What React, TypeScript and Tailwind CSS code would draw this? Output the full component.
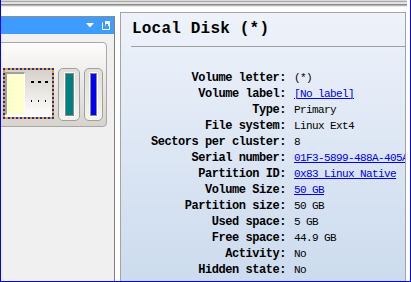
import React from "react";

const rows: { label: string; value: string; link?: boolean }[] = [
  { label: "Volume letter:", value: "(*)" },
  { label: "Volume label:", value: "[No label]", link: true },
  { label: "Type:", value: "Primary" },
  { label: "File system:", value: "Linux Ext4" },
  { label: "Sectors per cluster:", value: "8" },
  { label: "Serial number:", value: "01F3-5899-488A-405A", link: true },
  { label: "Partition ID:", value: "0x83 Linux Native", link: true },
  { label: "Volume Size:", value: "50 GB", link: true },
  { label: "Partition size:", value: "50 GB" },
  { label: "Used space:", value: "5 GB" },
  { label: "Free space:", value: "44.9 GB" },
  { label: "Activity:", value: "No" },
  { label: "Hidden state:", value: "No" },
];

export default function App() {
  return (
    <div className="w-[411px] h-[282px] overflow-hidden bg-white border-x border-b border-[#0000ff] flex flex-col font-['Liberation_Mono',monospace]">
      {/* top strip */}
      <div className="flex flex-col w-[406px] shrink-0">
        <div className="h-px bg-[#d8d8d8]" />
        <div className="h-px bg-[#a6a6a6]" />
        <div className="h-[2px] bg-[#e2e2e2]" />
        <div className="h-px bg-[#8c8c8c]" />
        <div className="h-px bg-[#b4b4b4]" />
        <div className="h-px bg-[#ececec]" />
      </div>

      <div className="flex flex-1 min-h-0">
        {/* left panel */}
        <div className="mt-[9px] w-[114px] shrink-0 border-t border-t-[#8e8e8e] border-r border-r-[#808080] bg-[#f0f0f0] flex flex-col overflow-hidden">
          <div className="h-[17px] bg-[#3f9cff] flex items-center justify-end pr-[4px] gap-[8px]">
            <svg width="8" height="5" viewBox="0 0 8 5">
              <path d="M0 0 H8 L4 4.5 Z" fill="#fff" />
            </svg>
            <svg width="8" height="9" viewBox="0 0 8 9">
              <path d="M0.5 1.5 V8.5 H7.5 V1.5" fill="none" stroke="#fff" strokeWidth="1" />
              <rect x="3" y="0" width="5" height="5" fill="#fff" />
              <path d="M2 7 L5 4" stroke="#3f9cff" strokeWidth="1.2" />
              <path d="M3 3 H6 V6 Z" fill="#3f9cff" />
            </svg>
          </div>
          <div className="mt-[8px] ml-[-6px] mr-[7px] h-[85px] rounded-[4px] border border-[#a8a8a8] bg-linear-to-b from-[#fcfcfc] to-[#d8d4cc] flex items-start pl-[7px] pt-[25px] gap-[4px]">
            {/* selected item */}
            <div className="w-[51px] h-[51px] bg-[#f5a000] shrink-0">
              <div className="w-full h-full border-2 border-dotted border-[#1030e0] bg-clip-padding bg-linear-to-b from-[#d6d2ca] to-[#ffffff] flex pt-[1px]">
                <div className="w-[20px] h-[43px] border-l-2 border-t-2 border-[#a0a0a0] border-r border-b border-r-white border-b-white bg-[#ffffcc] mt-[1px]" />
                <div className="flex flex-col ml-[6px]">
                  <div className="flex gap-[4px] mt-[10px]">
                    <div className="w-[3px] h-[2px] bg-black" />
                    <div className="w-[3px] h-[2px] bg-black" />
                    <div className="w-[3px] h-[2px] bg-black" />
                  </div>
                  <div className="flex gap-[6px] mt-[17px]">
                    <div className="w-[1px] h-[2px] bg-black" />
                    <div className="w-[1px] h-[2px] bg-black" />
                    <div className="w-[1px] h-[2px] bg-black" />
                  </div>
                </div>
              </div>
            </div>
            {/* teal item */}
            <div className="w-[22px] h-[53px] shrink-0 rounded-[5px] border border-[#a0a0a0] bg-linear-to-b from-[#e2dfd8] to-[#f4f3ef] flex justify-center pt-[4px]">
              <div className="w-[9px] h-[43px] border border-[#8a8a8a] bg-[#008080] outline outline-white" />
            </div>
            {/* blue item */}
            <div className="w-[19px] h-[53px] shrink-0 rounded-[5px] border border-[#a0a0a0] bg-linear-to-b from-[#e2dfd8] to-[#f4f3ef] flex justify-center pt-[4px]">
              <div className="w-[7px] h-[43px] border border-[#8a8a8a] bg-[#0000ff] outline outline-white" />
            </div>
          </div>
        </div>

        {/* right panel */}
        <div className="ml-[5px] mt-[5px] w-[286px] shrink-0 border-t border-x border-[#a4a4a4] bg-linear-to-b from-[#eef2fa] to-[#ccdbee] overflow-hidden flex flex-col">
          <div className="pl-[11px] pt-[6px] h-[26px] text-[16px] leading-[20px] font-bold tracking-[0.2px] text-black whitespace-nowrap">
            Local Disk (*)
          </div>
          <div className="ml-[10px] mt-[7px] h-px bg-[#a0a0a0]" />
          <div className="mt-[23px] flex flex-col">
            {rows.map((r) => (
              <div key={r.label} className="h-[16px] flex items-center whitespace-nowrap">
                <div className="w-[165px] shrink-0 text-right text-[12px] font-bold tracking-[-0.45px] text-black">
                  {r.label}
                </div>
                <div
                  className={
                    r.link
                      ? "ml-[8px] text-[11px] tracking-[-0.6px] text-[#0000ee] underline"
                      : "ml-[8px] text-[11px] tracking-[-0.6px] text-black"
                  }
                >
                  {r.value}
                </div>
              </div>
            ))}
          </div>
        </div>
      </div>
    </div>
  );
}
